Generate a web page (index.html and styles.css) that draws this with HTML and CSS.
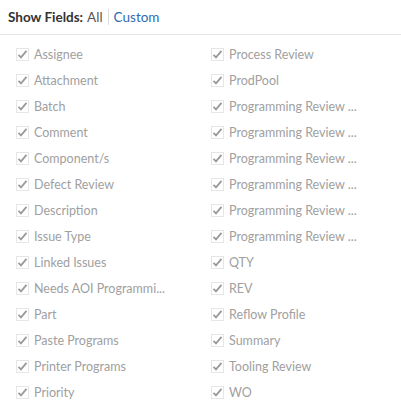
FILE: index.html
```html
<!DOCTYPE html>
<html lang="en">
   <head>
      <meta charset="UTF-8" />
      <title>Show Fields</title>
      <link rel="stylesheet" href="styles.css">
   </head>
   <body>
      <div class="header">
         <span class="header-label">Show Fields:</span>
         <span class="option">All</span>
         <span class="option option-link">Custom</span>
      </div>
      <div class="fields" id="fields"></div>
      <script>
         const fields = [
           'Assignee', 'Attachment', 'Batch', 'Comment', 'Component/s', 'Defect Review',
           'Description', 'Issue Type', 'Linked Issues', 'Needs AOI Programmi...', 'Part',
           'Paste Programs', 'Printer Programs', 'Priority',
           'Process Review', 'ProdPool', 'Programming Review ...', 'Programming Review ...',
           'Programming Review ...', 'Programming Review ...', 'Programming Review ...',
           'Programming Review ...', 'QTY', 'REV', 'Reflow Profile', 'Summary',
           'Tooling Review', 'WO'
         ];
         const check = '<svg class="check" width="13" height="13" viewBox="0 0 13 13">' +
           '<rect x="0.5" y="0.5" width="12" height="12" fill="#fff" stroke="#e6e6e6"/>' +
           '<path d="M2.5 6.8 L5 9.3 L10.5 2.8" fill="none" stroke="#9a9a9a" stroke-width="1.8"/></svg>';
         const container = document.getElementById('fields');
         fields.forEach(name => {
           const row = document.createElement('label');
           row.className = 'field';
           row.innerHTML = check + '<span class="field-name"></span>';
           row.querySelector('.field-name').textContent = name;
           container.appendChild(row);
         });
      </script>
   </body>
</html>
```
FILE: styles.css
```css
body {
margin: 0;
padding: 0;
background-color: #fff;
font-family: Lato, "Open Sans", sans-serif;
font-size: 13px;
}
.header {
display: flex;
align-items: center;
height: 34px;
padding: 0 8px;
border-bottom: 1px solid #e6e6e6;
color: #333;
font-size: 13.5px;
}
.header-label {
font-weight: bold;
margin-right: 4px;
}
.option {
color: #555;
padding-right: 5px;
}
.option-link {
color: #2e6bb4;
border-left: 1px solid #dcdcdc;
padding-left: 5px;
}
.fields {
display: grid;
grid-template-columns: 195px 1fr;
grid-template-rows: repeat(14, 26px);
grid-auto-flow: column;
padding: 6px 0 0 16px;
font-size: 12.5px;
}
.field {
display: flex;
align-items: center;
gap: 5px;
color: #a0a0a0;
white-space: nowrap;
}
.check {
flex-shrink: 0;
}
```
